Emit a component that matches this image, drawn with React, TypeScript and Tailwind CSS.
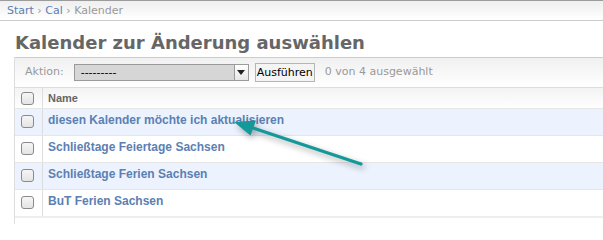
import React from "react";

const rows = [
  "diesen Kalender möchte ich aktualisieren",
  "Schließtage Feiertage Sachsen",
  "Schließtage Ferien Sachsen",
  "BuT Ferien Sachsen",
];

const Checkbox = () => (
  <span className="block h-[13px] w-[13px] rounded-[3px] border border-[#8a8a8a] bg-gradient-to-b from-[#f6f6f6] to-[#e4e4e4]" />
);

export default function App() {
  return (
    <div className="relative h-[224px] w-[603px] overflow-hidden bg-white font-['DejaVu_Sans',sans-serif] text-[11px]">
      {/* breadcrumbs */}
      <div className="h-[21px] border-t border-b border-t-[#9c9c9c] border-b-[#cccccc] bg-gradient-to-b from-[#efefef] to-white pl-[7px] leading-[19px] text-[#999]">
        <a className="text-[#5b80b2]">Start</a> › <a className="text-[#5b80b2]">Cal</a> › Kalender
      </div>

      <h1 className="mt-[11px] mb-[3px] pl-[15px] text-[18px] font-bold leading-[22px] text-[#666]">
        Kalender zur Änderung auswählen
      </h1>

      <div className="ml-[14px] border-l border-[#dddddd]">
        {/* actions */}
        <div className="flex h-[31px] items-center border-t border-b border-t-[#cccccc] border-b-[#dddddd] bg-gradient-to-b from-[#f0f0f0] to-white pl-[10px]">
          <span className="text-[#999]">Aktion:</span>
          <div className="ml-[10px] flex h-[17px] w-[175px] items-center border border-[#9a9a9a] bg-[#d6d6d6]">
            <span className="flex-1 pl-[6px] leading-[15px] text-black">---------</span>
            <span className="flex h-[15px] w-[14px] items-center justify-center border-l border-[#9a9a9a] bg-gradient-to-b from-white to-[#e6e6e6]">
              <svg width="8" height="5" viewBox="0 0 8 5">
                <path d="M0 0H8L4 5Z" fill="#222" />
              </svg>
            </span>
          </div>
          <button className="ml-[6px] h-[19px] border border-[#b5b5b5] bg-[#f4f4f4] px-[1px] leading-[17px] text-black">
            Ausführen
          </button>
          <span className="ml-[10px] text-[#999]">0 von 4 ausgewählt</span>
        </div>

        {/* header */}
        <div className="flex h-[20px] bg-gradient-to-b from-[#f3f3f3] to-white font-['Liberation_Sans',sans-serif]">
          <div className="flex w-[28px] shrink-0 items-center border-r border-[#dddddd] pl-[6px]">
            <Checkbox />
          </div>
          <div className="pl-[5px] pt-[4px] text-[11px] font-bold leading-[13px] text-[#666]">Name</div>
        </div>

        {rows.map((r, i) => (
          <div
            key={r}
            className={`flex h-[27px] border-t border-[#e6e6e6] font-['Liberation_Sans',sans-serif] ${
              i % 2 === 0 ? "bg-[#edf3fe]" : "bg-white"
            }`}
          >
            <div className="w-[28px] shrink-0 border-r border-[#dddddd] pl-[6px] pt-[6px]">
              <Checkbox />
            </div>
            <a className="pl-[5px] pt-[5px] text-[12px] font-bold leading-[13px] text-[#5b80b2]">{r}</a>
          </div>
        ))}
        <div className="h-[8px] border-t-2 border-[#eeeeee]" />
      </div>

      {/* annotation arrow */}
      <svg
        className="pointer-events-none absolute left-0 top-0"
        width="603"
        height="224"
        style={{ filter: "drop-shadow(2px 3px 3px rgba(0,0,0,0.35))" }}
      >
        <line x1="361" y1="164" x2="250" y2="127" stroke="#14989a" strokeWidth="3.2" strokeLinecap="round" />
        <path d="M234 122 L256 120.5 L250.5 135.5 Z" fill="#14989a" />
      </svg>
    </div>
  );
}
